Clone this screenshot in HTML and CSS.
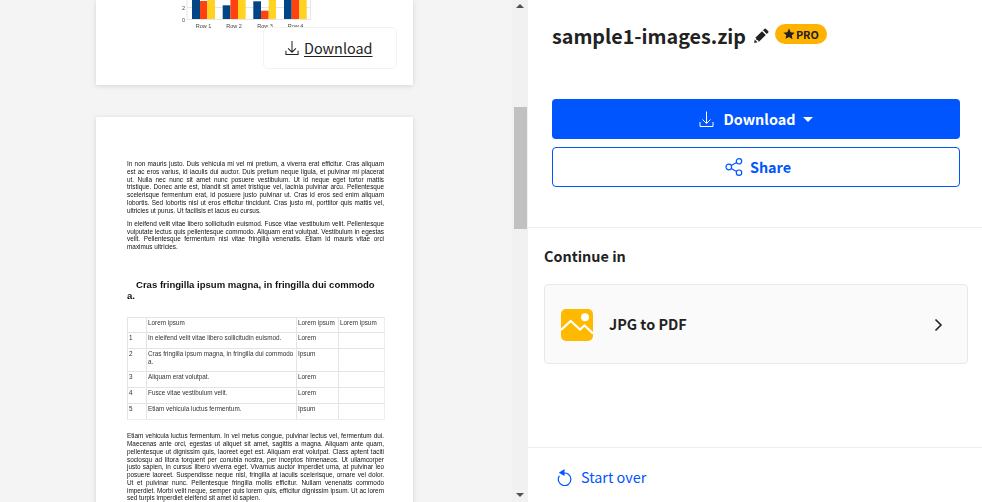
FILE: index.html
```html
<!DOCTYPE html>
<html lang="en">
<head>
<meta charset="utf-8">
<title>sample1-images.zip</title>
<link rel="stylesheet" href="styles.css">
</head>
<body>
<div class="app">
  <main class="viewer">
    <section class="sheet sheet-first">
      <svg class="chart" width="317" height="32" viewBox="96 0 317 32">
        <path d="M187 7.5H310M187 19.5H310.5M310.5 0V20M187 0V20" stroke="#e6e6e6" stroke-width="1" fill="none"/>
        <g fill="#004586">
          <rect x="192" y="0" width="8" height="19"/><rect x="222.7" y="5.3" width="7.7" height="13.7"/><rect x="253.3" y="1.3" width="7.7" height="17.7"/><rect x="284" y="0" width="7.7" height="19"/>
        </g>
        <g fill="#ff420e">
          <rect x="200" y="1" width="7.3" height="18"/><rect x="230.4" y="0" width="7.6" height="19"/><rect x="261" y="10.7" width="7.7" height="8.3"/><rect x="291.7" y="0" width="7.6" height="19"/>
        </g>
        <g fill="#ffd320">
          <rect x="207.3" y="0" width="7.7" height="19"/><rect x="238" y="0" width="7.7" height="19"/><rect x="268.7" y="0" width="7.3" height="19"/><rect x="299.3" y="0" width="7.4" height="19"/>
        </g>
        <g class="chart-text">
          <text x="182" y="10">2</text><text x="182" y="22">0</text>
          <text x="203.5" y="28" text-anchor="middle">Row 1</text><text x="234" y="28" text-anchor="middle">Row 2</text><text x="265" y="28" text-anchor="middle">Row 3</text><text x="295.5" y="28" text-anchor="middle">Row 4</text>
        </g>
      </svg>
    </section>
    <a class="page-download">
      <svg width="14" height="16" viewBox="0 0 15 16" fill="none" stroke="#222" stroke-width="1.1"><path d="M7.500 .5v12M3.300 8.300l4.200 4.200 4.200-4.200M1 11v4h13v-4"/></svg>
      <span>Download</span>
    </a>
    <section class="sheet sheet-second">
      <div class="doc-content">
      <p class="doc-p">In non mauris justo. Duis vehicula mi vel mi pretium, a viverra erat efficitur. Cras aliquam est ac eros varius, id iaculis dui auctor. Duis pretium neque ligula, et pulvinar mi placerat ut. Nulla nec nunc sit amet nunc posuere vestibulum. Ut id neque eget tortor mattis tristique. Donec ante est, blandit sit amet tristique vel, lacinia pulvinar arcu. Pellentesque scelerisque fermentum erat, id posuere justo pulvinar ut. Cras id eros sed enim aliquam lobortis. Sed lobortis nisl ut eros efficitur tincidunt. Cras justo mi, porttitor quis mattis vel, ultricies ut purus. Ut facilisis et lacus eu cursus.</p>
      <p class="doc-p doc-p-2">In eleifend velit vitae libero sollicitudin euismod. Fusce vitae vestibulum velit. Pellentesque vulputate lectus quis pellentesque commodo. Aliquam erat volutpat. Vestibulum in egestas velit. Pellentesque fermentum nisi vitae fringilla venenatis. Etiam id mauris vitae orci maximus ultricies.</p>
      <h2 class="doc-h">Cras fringilla ipsum magna, in fringilla dui commodo a.</h2>
      <table class="doc-table">
        <colgroup><col class="c1"><col class="c2"><col class="c3"><col class="c4"></colgroup>
        <tr class="r1"><td></td><td>Lorem ipsum</td><td>Lorem ipsum</td><td>Lorem ipsum</td></tr>
        <tr class="r2"><td>1</td><td>In eleifend velit vitae libero sollicitudin euismod.</td><td>Lorem</td><td></td></tr>
        <tr class="r3"><td>2</td><td>Cras fringilla ipsum magna, in fringilla dui commodo a.</td><td>Ipsum</td><td></td></tr>
        <tr class="r2"><td>3</td><td>Aliquam erat volutpat.</td><td>Lorem</td><td></td></tr>
        <tr class="r2"><td>4</td><td>Fusce vitae vestibulum velit.</td><td>Lorem</td><td></td></tr>
        <tr class="r2"><td>5</td><td>Etiam vehicula luctus fermentum.</td><td>Ipsum</td><td></td></tr>
      </table>
      <p class="doc-p doc-p-3">Etiam vehicula luctus fermentum. In vel metus congue, pulvinar lectus vel, fermentum dui. Maecenas ante orci, egestas ut aliquet sit amet, sagittis a magna. Aliquam ante quam, pellentesque ut dignissim quis, laoreet eget est. Aliquam erat volutpat. Class aptent taciti sociosqu ad litora torquent per conubia nostra, per inceptos himenaeos. Ut ullamcorper justo sapien, in cursus libero viverra eget. Vivamus auctor imperdiet urna, at pulvinar leo posuere laoreet. Suspendisse neque nisl, fringilla at iaculis scelerisque, ornare vel dolor. Ut et pulvinar nunc. Pellentesque fringilla mollis efficitur. Nullam venenatis commodo imperdiet. Morbi velit neque, semper quis lorem quis, efficitur dignissim ipsum. Ut ac lorem sed turpis imperdiet eleifend sit amet id sapien.</p>
      </div>
    </section>
  </main>
  <div class="scrollbar">
    <div class="arrow arrow-up"></div>
    <div class="thumb"></div>
    <div class="arrow arrow-down"></div>
  </div>
  <aside class="panel">
    <header class="title-row">
      <h1 class="file-name">sample1-images.zip</h1>
      <svg class="pencil" width="15" height="15" viewBox="0 0 15 15"><path fill="#222" d="M10.300.9a1.200 1.200 0 0 1 1.700 0l2.100 2.100a1.200 1.200 0 0 1 0 1.700l-1.300 1.300L9 2.200zM8 3.200l3.800 3.800-7.100 7.100-.5-1.900-1.800-.1-.2-1.800-1.100-.2zM.7 11.500l2.800 2.800-3.300.7z"/></svg>
      <span class="pro">
        <svg width="12" height="12" viewBox="0 0 24 24"><path fill="#222" d="M12 1l3.400 7.300 7.900 1-5.800 5.500 1.500 7.900L12 17.800l-7 3.900 1.500-7.900L.7 9.300l7.900-1z"/></svg>
        <span>PRO</span>
      </span>
    </header>
    <div class="actions">
      <button class="btn btn-primary">
        <svg width="15" height="16" viewBox="0 0 15 16" fill="none" stroke="#fff" stroke-width="1"><path d="M7.500 .5v12M3.500 8.500l4 4 4-4M1 11v4.500h13V11"/></svg>
        <span>Download</span>
        <i class="caret"></i>
      </button>
      <button class="btn btn-outline">
        <svg width="18" height="18" viewBox="0 0 18 18" fill="none" stroke="#0055ff" stroke-width="1.200"><circle cx="3.800" cy="9" r="2.800"/><circle cx="14" cy="3.300" r="2.700"/><circle cx="14" cy="14.700" r="2.700"/><path d="M6.300 7.600 11.600 4.600M6.300 10.400l5.300 3"/></svg>
        <span>Share</span>
      </button>
    </div>
    <section class="continue">
      <h3 class="continue-title">Continue in</h3>
      <a class="tool-card">
        <svg class="tool-icon" width="32" height="32" viewBox="0 0 32 32">
          <rect width="32" height="32" rx="5" fill="#ffb900"/>
          <circle cx="24" cy="8.300" r="4" fill="#fff"/>
          <path d="M0 21 9.700 12 19 20.500 23.500 16.500 32 24.500" fill="none" stroke="#fff" stroke-width="2.200"/>
        </svg>
        <span class="tool-name">JPG to PDF</span>
        <svg class="chevron" width="9" height="14" viewBox="0 0 9 14" fill="none" stroke="#222" stroke-width="1.600"><path d="M1.500 1.500 7 7l-5.500 5.500"/></svg>
      </a>
    </section>
    <footer class="panel-foot">
      <svg width="16" height="18" viewBox="0 0 16 18" fill="none"><path d="M5.800 4.300A6.300 6.300 0 1 1 2.400 6.800" stroke="#0055ff" stroke-width="1.200" transform="translate(0 1)"/><path d="M7.500 1v7L1.800 4.800z" fill="#0055ff"/></svg>
      <span>Start over</span>
    </footer>
  </aside>
</div>
</body>
</html>
```
FILE: styles.css
```css
* { box-sizing: border-box; }
html, body { margin: 0; height: 100%; overflow: hidden; background: #fff; }
body { font-family: "Noto Sans CJK SC", "Noto Sans", sans-serif; color: #222; }
.app { display: flex; width: 982px; height: 502px; overflow: hidden; }

.viewer { position: relative; width: 512px; height: 502px; flex: none; padding-left: 96px; background: #f4f4f4; overflow: hidden; }
.sheet { width: 317px; background: #fff; box-shadow: 0 1px 5px rgba(0,0,0,.13); }
.sheet-first { height: 85px; overflow: hidden; }
.chart { display: block; filter: blur(.3px); }
.chart-text { font: 5.5px "Liberation Sans", sans-serif; fill: #444; }
.page-download { position: absolute; left: 263px; top: 27px; width: 134px; height: 42px; display: flex; align-items: center; gap: 5px; padding: 0 0 0 21px; background: #fff; border: 1px solid #f3f3f3; border-radius: 5px; font-size: 14.4px; line-height: 20px; color: #222; }
.page-download span { text-decoration: underline; text-underline-offset: 2px; }
.sheet-second { margin-top: 32px; height: 500px; padding: 43px 29px 0 31px; font-family: "Liberation Sans", sans-serif; color: #111; }
.doc-content { filter: blur(.25px); }
.doc-p { margin: 0; font-size: 6.4px; line-height: 7.75px; text-align: justify; }
.doc-p-2 { margin-top: 5.500px; }
.doc-p-3 { margin-top: 12px; }
.doc-h { margin: 28px 0 0; font-size: 9.55px; line-height: 11px; font-weight: 700; text-indent: 9px; }
.doc-table { width: 256.500px; margin-top: 16.500px; border-collapse: collapse; table-layout: fixed; font-size: 6.35px; line-height: 7.500px; color: #333; border: 1px solid #eee; }
.c1 { width: 19px; } .c2 { width: 150px; } .c3 { width: 42px; } .c4 { width: 45.500px; }
.doc-table td { border: 1px solid #e4e4e4; padding: 1px 1px 0; vertical-align: top; }
.doc-table tr td:last-child { border-right-color: #eee; }
.doc-table tr:last-child td { border-bottom-color: #eee; }
.r1 { height: 15px; } .r2 { height: 16px; } .r3 { height: 23px; }

.scrollbar { width: 16px; flex: none; display: flex; flex-direction: column; align-items: center; background: #f1f1f1; }
.arrow { width: 0; height: 0; border-left: 4px solid transparent; border-right: 4px solid transparent; }
.arrow-up { margin-top: 4px; border-bottom: 4px solid #505050; }
.arrow-down { margin-top: auto; margin-bottom: 5px; border-top: 4px solid #505050; }
.thumb { width: 13px; height: 122px; margin-top: 99px; background: #c1c1c1; }

.panel { flex: 1; min-width: 0; display: flex; flex-direction: column; background: #fff; }
.title-row { display: flex; align-items: flex-start; height: 99px; padding: 20px 0 0 24px; }
.file-name { margin: 0; font-size: 19.7px; line-height: 32px; font-weight: 700; color: #222; }
.pencil { margin: 8px 0 0 8px; }
.pro { display: flex; align-items: center; gap: 1px; height: 20px; margin: 4px 0 0 6px; padding: 0 8px 0 8px; border-radius: 10px; background: #ffb300; font-size: 10.8px; line-height: 20px; font-weight: 700; color: #222; }
.actions { display: flex; flex-direction: column; gap: 8px; padding: 0 22px 0 24px; }
.btn { display: flex; align-items: center; justify-content: center; width: 408px; height: 40px; padding: 0; border-radius: 4px; font: 700 14.4px/22px "Noto Sans CJK SC", "Noto Sans", sans-serif; }
.btn-primary { gap: 10px; border: 0; background: #0055ff; color: #fff; }
.caret { width: 0; height: 0; margin-left: -2px; border-left: 5px solid transparent; border-right: 5px solid transparent; border-top: 5px solid #fff; }
.btn-outline { gap: 7px; padding-left: 4px; border: 1px solid #0055ff; background: #fff; color: #0055ff; }
.continue { margin-top: 40px; border-top: 1px solid #eee; padding: 16px 14px 0 16px; }
.continue-title { margin: 0; font-size: 14.4px; line-height: 24px; font-weight: 700; color: #222; }
.tool-card { display: flex; align-items: center; height: 80px; margin-top: 16px; padding: 0 24px 0 16px; background: #fafafa; border: 1px solid #e8e8e8; border-radius: 4px; }
.tool-icon { margin-top: 2px; }
.tool-name { margin-left: 16px; font-size: 14.4px; line-height: 24px; font-weight: 700; color: #222; }
.chevron { margin-left: auto; margin-top: 2px; }
.panel-foot { display: flex; align-items: center; gap: 8px; margin-top: auto; height: 55px; padding: 4px 0 0 29px; border-top: 1px solid #eee; font-size: 14.4px; line-height: 24px; color: #0055ff; }
```
